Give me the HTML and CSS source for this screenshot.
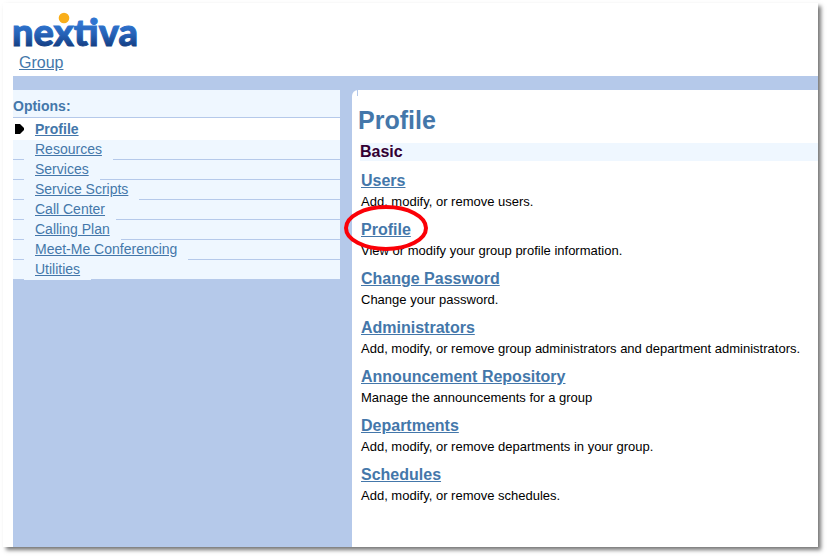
FILE: index.html
```html
<!DOCTYPE html>
<html lang="en">
<head>
<meta charset="utf-8">
<title>Profile</title>
<link rel="stylesheet" href="styles.css">
</head>
<body>
<div class="sheet">
  <header class="header">
    <svg class="logo" width="132" height="40" viewBox="0 0 132 40" role="img" aria-label="nextiva">
      <defs>
        <linearGradient id="blue" gradientUnits="userSpaceOnUse" x1="0" y1="14" x2="0" y2="36">
          <stop offset="0" stop-color="#2f74d0"/>
          <stop offset="0.5" stop-color="#2560b4"/>
          <stop offset="1" stop-color="#153f85"/>
        </linearGradient>
      </defs>
      <text class="logo-text" x="-1" y="36" fill="url(#blue)" stroke="url(#blue)">nextiva</text>
      <circle cx="51" cy="8" r="5.3" fill="#f9ae19"/>
    </svg>
    <a class="crumb" href="#">Group</a>
  </header>
  <div class="body">
    <nav class="sidebar">
      <h2 class="options-title">Options:</h2>
      <ul class="options">
        <li class="option current">
          <svg class="arrow" width="9" height="10" viewBox="0 0 9 10" aria-hidden="true"><path d="M0 0H5L9 4V6L5 10H0Z"/></svg>
          <a href="#" aria-current="page">Profile</a>
        </li>
        <li class="option"><a href="#">Resources</a></li>
        <li class="option"><a href="#">Services</a></li>
        <li class="option"><a href="#">Service Scripts</a></li>
        <li class="option"><a href="#">Call Center</a></li>
        <li class="option"><a href="#">Calling Plan</a></li>
        <li class="option"><a href="#">Meet-Me Conferencing</a></li>
        <li class="option"><a href="#">Utilities</a></li>
      </ul>
    </nav>
    <main class="content">
      <h1 class="title">Profile</h1>
      <h2 class="section">Basic</h2>
      <dl class="items">
        <dt><a href="#">Users</a></dt>
        <dd>Add, modify, or remove users.</dd>
        <dt class="marked"><a href="#">Profile</a>
          <svg class="ring" width="86" height="48" viewBox="0 0 86 48" aria-hidden="true"><ellipse cx="43" cy="24" rx="40" ry="21"/></svg>
        </dt>
        <dd>View or modify your group profile information.</dd>
        <dt><a href="#">Change Password</a></dt>
        <dd>Change your password.</dd>
        <dt><a href="#">Administrators</a></dt>
        <dd>Add, modify, or remove group administrators and department administrators.</dd>
        <dt><a href="#">Announcement Repository</a></dt>
        <dd>Manage the announcements for a group</dd>
        <dt><a href="#">Departments</a></dt>
        <dd>Add, modify, or remove departments in your group.</dd>
        <dt><a href="#">Schedules</a></dt>
        <dd>Add, modify, or remove schedules.</dd>
      </dl>
    </main>
  </div>
</div>
</body>
</html>
```
FILE: styles.css
```css
* {
  box-sizing: border-box;
}

body {
  margin: 0;
  min-height: 100vh;
  padding: 3px 9px 9px 3px;
  display: flex;
  background: #fff;
  color: #000;
  font: 14px/20px "Liberation Sans", Arial, sans-serif;
}

h1, h2, ul, dl, dd {
  margin: 0;
  padding: 0;
}

a {
  color: #4477aa;
}

.sheet {
  flex: 1;
  min-width: 0;
  display: flex;
  flex-direction: column;
  padding-left: 10px;
  background: #fff;
  box-shadow: 3px 3px 4px #777;
}

.header {
  display: flex;
  flex-direction: column;
  align-items: flex-start;
  padding: 7px 0 3px;
}

.logo {
  display: block;
  overflow: visible;
}

.logo-text {
  font: 900 38px Lato, sans-serif;
  stroke-width: 1;
}

.crumb {
  margin-left: 6px;
  padding-top: 3px;
  font-size: 16px;
}

.body {
  flex: 1;
  display: grid;
  grid-template-columns: minmax(0, 327fr) minmax(0, 466fr);
  column-gap: 12px;
  padding-top: 14px;
  background: #b5c9ea;
}

.options-title {
  height: 28px;
  padding-top: 6px;
  background: #eff7ff;
  border-bottom: 1px solid #b5c9ea;
  color: #4477aa;
  font-size: 14px;
}

.options {
  list-style: none;
}

.option {
  height: 20px;
  padding-left: 11px;
  background: #eff7ff;
  border-bottom: 1px solid #b5c9ea;
}

.option a {
  display: inline-block;
  height: 20px;
  padding: 0 11px;
  background: #eff7ff;
  line-height: 18px;
  vertical-align: top;
}

.option:last-child {
  height: 19px;
  border-bottom: 0;
}

.option.current {
  display: flex;
  align-items: center;
  height: 22px;
  padding-left: 2px;
  background: #fff;
  border-bottom: 0;
  font-weight: bold;
}

.option.current a {
  background: none;
  line-height: 20px;
}

.arrow {
  fill: #000;
}

.content {
  position: relative;
  padding: 14px 0 20px 6px;
  background: #fff;
  border-top-left-radius: 6px;
}

.content::before {
  content: "";
  position: absolute;
  top: 0;
  left: 5px;
  width: 1px;
  height: 6px;
  background: #b5c9ea;
}

.title {
  color: #4477aa;
  font-size: 25px;
  line-height: 32px;
}

.section {
  margin: 7px 0 0 2px;
  background: #eff7ff;
  color: #330033;
  font-size: 16px;
  line-height: 18px;
}

.items {
  padding: 9px 0 0 3px;
}

.items dt {
  font-size: 16px;
  font-weight: bold;
  line-height: 22px;
}

.items dd {
  margin-bottom: 7px;
  font-size: 13px;
  line-height: 20px;
}

.items .marked {
  position: relative;
}

.ring {
  position: absolute;
  top: -15px;
  left: -18px;
  fill: none;
  stroke: #fb0007;
  stroke-width: 4;
}
```
